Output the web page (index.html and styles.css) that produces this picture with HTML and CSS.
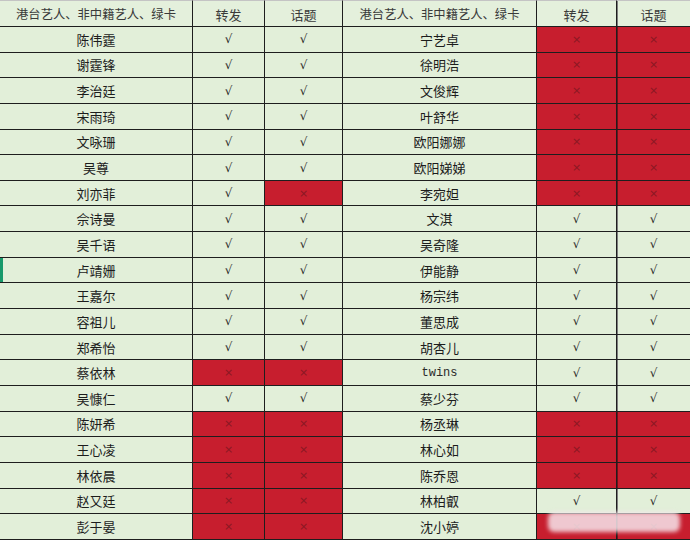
FILE: index.html
```html
<!DOCTYPE html>
<html lang="zh">
<head>
<meta charset="utf-8">
<title>名单</title>
<link rel="stylesheet" href="styles.css">
</head>
<body>
<div class="sheet">
  <div class="grid" id="grid">
    <div class="c h name">港台艺人、非中籍艺人、绿卡</div><div class="c h">转发</div><div class="c h">话题</div>
    <div class="c h name">港台艺人、非中籍艺人、绿卡</div><div class="c h">转发</div><div class="c h soft">话题</div>

    <div class="c name">陈伟霆</div><div class="c ok">√</div><div class="c ok">√</div>
    <div class="c name">宁艺卓</div><div class="c no">×</div><div class="c no soft">×</div>

    <div class="c name">谢霆锋</div><div class="c ok">√</div><div class="c ok">√</div>
    <div class="c name">徐明浩</div><div class="c no">×</div><div class="c no soft">×</div>

    <div class="c name">李治廷</div><div class="c ok">√</div><div class="c ok">√</div>
    <div class="c name">文俊辉</div><div class="c no">×</div><div class="c no soft">×</div>

    <div class="c name">宋雨琦</div><div class="c ok">√</div><div class="c ok">√</div>
    <div class="c name">叶舒华</div><div class="c no">×</div><div class="c no soft">×</div>

    <div class="c name">文咏珊</div><div class="c ok">√</div><div class="c ok">√</div>
    <div class="c name">欧阳娜娜</div><div class="c no">×</div><div class="c no soft">×</div>

    <div class="c name">吴尊</div><div class="c ok">√</div><div class="c ok">√</div>
    <div class="c name">欧阳娣娣</div><div class="c no">×</div><div class="c no soft">×</div>

    <div class="c name">刘亦菲</div><div class="c ok">√</div><div class="c no">×</div>
    <div class="c name">李宛妲</div><div class="c no">×</div><div class="c no soft">×</div>

    <div class="c name">佘诗曼</div><div class="c ok">√</div><div class="c ok">√</div>
    <div class="c name">文淇</div><div class="c ok">√</div><div class="c ok soft">√</div>

    <div class="c name">吴千语</div><div class="c ok">√</div><div class="c ok">√</div>
    <div class="c name">吴奇隆</div><div class="c ok">√</div><div class="c ok soft">√</div>

    <div class="c name sel">卢靖姗</div><div class="c ok">√</div><div class="c ok">√</div>
    <div class="c name">伊能静</div><div class="c ok">√</div><div class="c ok soft">√</div>

    <div class="c name">王嘉尔</div><div class="c ok">√</div><div class="c ok">√</div>
    <div class="c name">杨宗纬</div><div class="c ok">√</div><div class="c ok soft">√</div>

    <div class="c name">容祖儿</div><div class="c ok">√</div><div class="c ok">√</div>
    <div class="c name">董思成</div><div class="c ok">√</div><div class="c ok soft">√</div>

    <div class="c name">郑希怡</div><div class="c ok">√</div><div class="c ok">√</div>
    <div class="c name">胡杏儿</div><div class="c ok">√</div><div class="c ok soft">√</div>

    <div class="c name">蔡依林</div><div class="c no">×</div><div class="c no">×</div>
    <div class="c name latin">twins</div><div class="c ok">√</div><div class="c ok soft">√</div>

    <div class="c name">吴慷仁</div><div class="c ok">√</div><div class="c ok">√</div>
    <div class="c name">蔡少芬</div><div class="c ok">√</div><div class="c ok soft">√</div>

    <div class="c name">陈妍希</div><div class="c no">×</div><div class="c no">×</div>
    <div class="c name">杨丞琳</div><div class="c no">×</div><div class="c no soft">×</div>

    <div class="c name">王心凌</div><div class="c no">×</div><div class="c no">×</div>
    <div class="c name">林心如</div><div class="c no">×</div><div class="c no soft">×</div>

    <div class="c name">林依晨</div><div class="c no">×</div><div class="c no">×</div>
    <div class="c name">陈乔恩</div><div class="c no">×</div><div class="c no soft">×</div>

    <div class="c name">赵又廷</div><div class="c no">×</div><div class="c no">×</div>
    <div class="c name">林柏叡</div><div class="c ok">√</div><div class="c ok soft">√</div>

    <div class="c name">彭于晏</div><div class="c no">×</div><div class="c no">×</div>
    <div class="c name">沈小婷</div><div class="c no">×</div><div class="c no soft">×</div>
  </div>
  <div class="watermark"></div>
</div>
</body>
</html>
```

FILE: styles.css
```css
html, body {
  margin: 0;
  padding: 0;
  background: #ffffff;
}

.sheet {
  position: relative;
  width: 690px;
  height: 540px;
  overflow: hidden;
  font-family: "Noto Sans CJK SC", "Noto Sans", sans-serif;
}

.grid {
  display: grid;
  grid-template-columns: 193px 72px 78px 194px 80px 73px;
  grid-template-rows: 27px repeat(20, 25.65px);
  width: 690px;
  background: #e2efd9;
}

.c {
  box-sizing: border-box;
  display: flex;
  align-items: center;
  justify-content: center;
  border-right: 1px solid #1e1e1e;
  border-bottom: 1px solid #1e1e1e;
  background: #e2efd9;
  color: #1c1c1c;
  font-size: 13px;
  line-height: 1;
  white-space: nowrap;
  overflow: hidden;
}

.c.soft {
  border-right: none;
  box-shadow: inset 1px 0 0 #7d7d7d;
}

.h {
  border-top: 1px solid #c4c4c4;
  background: #e4f0dc;
  color: #3a3a3a;
  padding-top: 1px;
}

.h.name {
  font-size: 12.3px;
  letter-spacing: 0;
}

.name {
  font-size: 13px;
}

.latin {
  font-family: "Liberation Mono", "DejaVu Sans Mono", monospace;
  font-size: 12px;
  color: #2a2a2a;
}

.ok {
  font-family: "DejaVu Sans", sans-serif;
  font-size: 12px;
  color: #262626;
}

.no {
  background: #c71e2e;
  color: #8a1823;
  font-family: "DejaVu Sans", sans-serif;
  font-size: 11px;
}

.no.soft {
  box-shadow: inset 1px 0 0 #6e1219;
}

.sel {
  box-shadow: inset 3px 0 0 #17996b;
}

.watermark {
  position: absolute;
  left: 548px;
  top: 512px;
  width: 132px;
  height: 20px;
  border-radius: 6px;
  background: rgba(246, 230, 236, 0.85);
  filter: blur(2px);
}
```
